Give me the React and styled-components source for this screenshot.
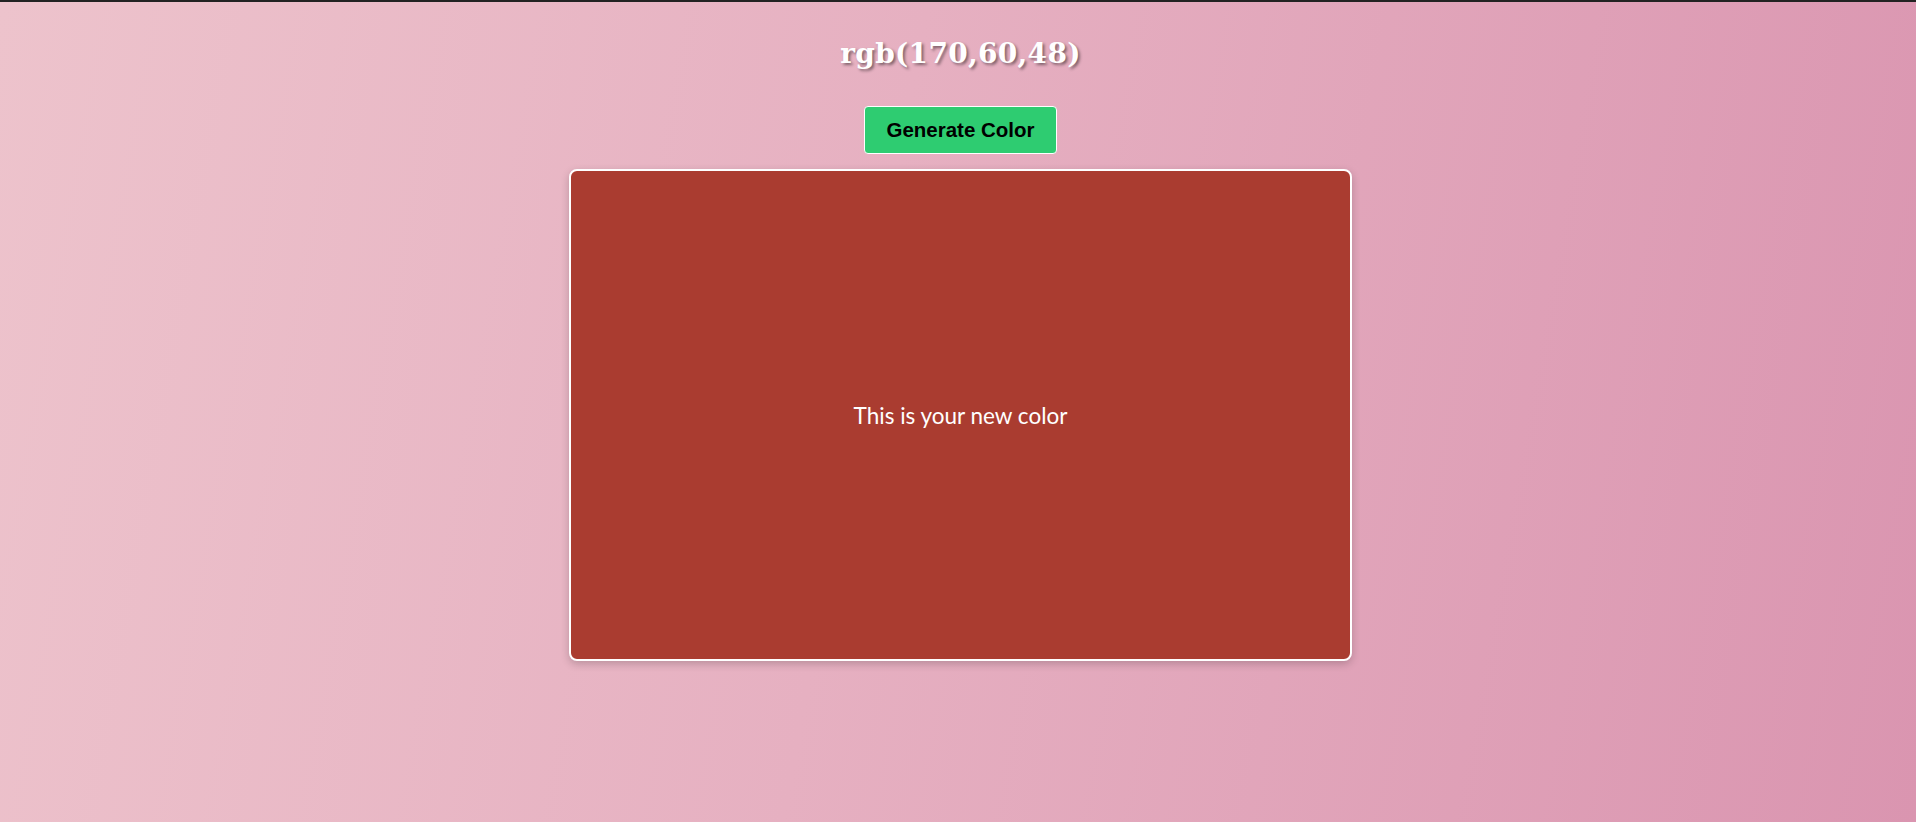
import React, { useState } from 'react';
import styled, { createGlobalStyle } from 'styled-components';

const GlobalStyle = createGlobalStyle`
  html, body {
    margin: 0;
    padding: 0;
    height: 100%;
  }
  body {
    font-family: "Liberation Sans", Arial, sans-serif;
  }
`;

const Page = styled.div`
  box-sizing: border-box;
  min-height: 822px;
  border-top: 2px solid #222;
  background: linear-gradient(100deg, #edc3cc 0%, #e6b0c1 45%, #da95b0 100%);
  display: flex;
  flex-direction: column;
  align-items: center;
  padding-left: 5px;
`;

const Title = styled.h1`
  margin: 34px 0 0;
  height: 36px;
  line-height: 36px;
  font-family: Georgia, "DejaVu Serif", serif;
  font-size: 28px;
  font-weight: bold;
  color: #ffffff;
  text-shadow: 2px 2px 3px rgba(0, 0, 0, 0.45);
  letter-spacing: 0.3px;
`;

const Button = styled.button`
  margin-top: 34px;
  width: 193px;
  height: 48px;
  border: 1px solid #ffffff;
  border-radius: 4px;
  background-color: #2ecc71;
  font-family: "Liberation Sans", Arial, sans-serif;
  font-size: 20.5px;
  font-weight: bold;
  color: #000;
  cursor: pointer;
`;

const Swatch = styled.div`
  box-sizing: border-box;
  margin-top: 15px;
  width: 783px;
  height: 492px;
  border: 2px solid #ffffff;
  border-radius: 8px;
  box-shadow: 0 3px 8px rgba(0, 0, 0, 0.2);
  background-color: ${p => p.color};
  display: flex;
  align-items: center;
  justify-content: center;
  font-family: "Gill Sans", Lato, "Open Sans", sans-serif;
  font-size: 22.5px;
  color: #ffffff;
`;

const randomColor = () => {
  const c = () => Math.floor(Math.random() * 256);
  return `rgb(${c()},${c()},${c()})`;
};

export default function App() {
  const [color, setColor] = useState('rgb(170,60,48)');
  return (
    <Page>
      <GlobalStyle />
      <Title>{color}</Title>
      <Button onClick={() => setColor(randomColor())}>Generate Color</Button>
      <Swatch color={color}>This is your new color</Swatch>
    </Page>
  );
}
